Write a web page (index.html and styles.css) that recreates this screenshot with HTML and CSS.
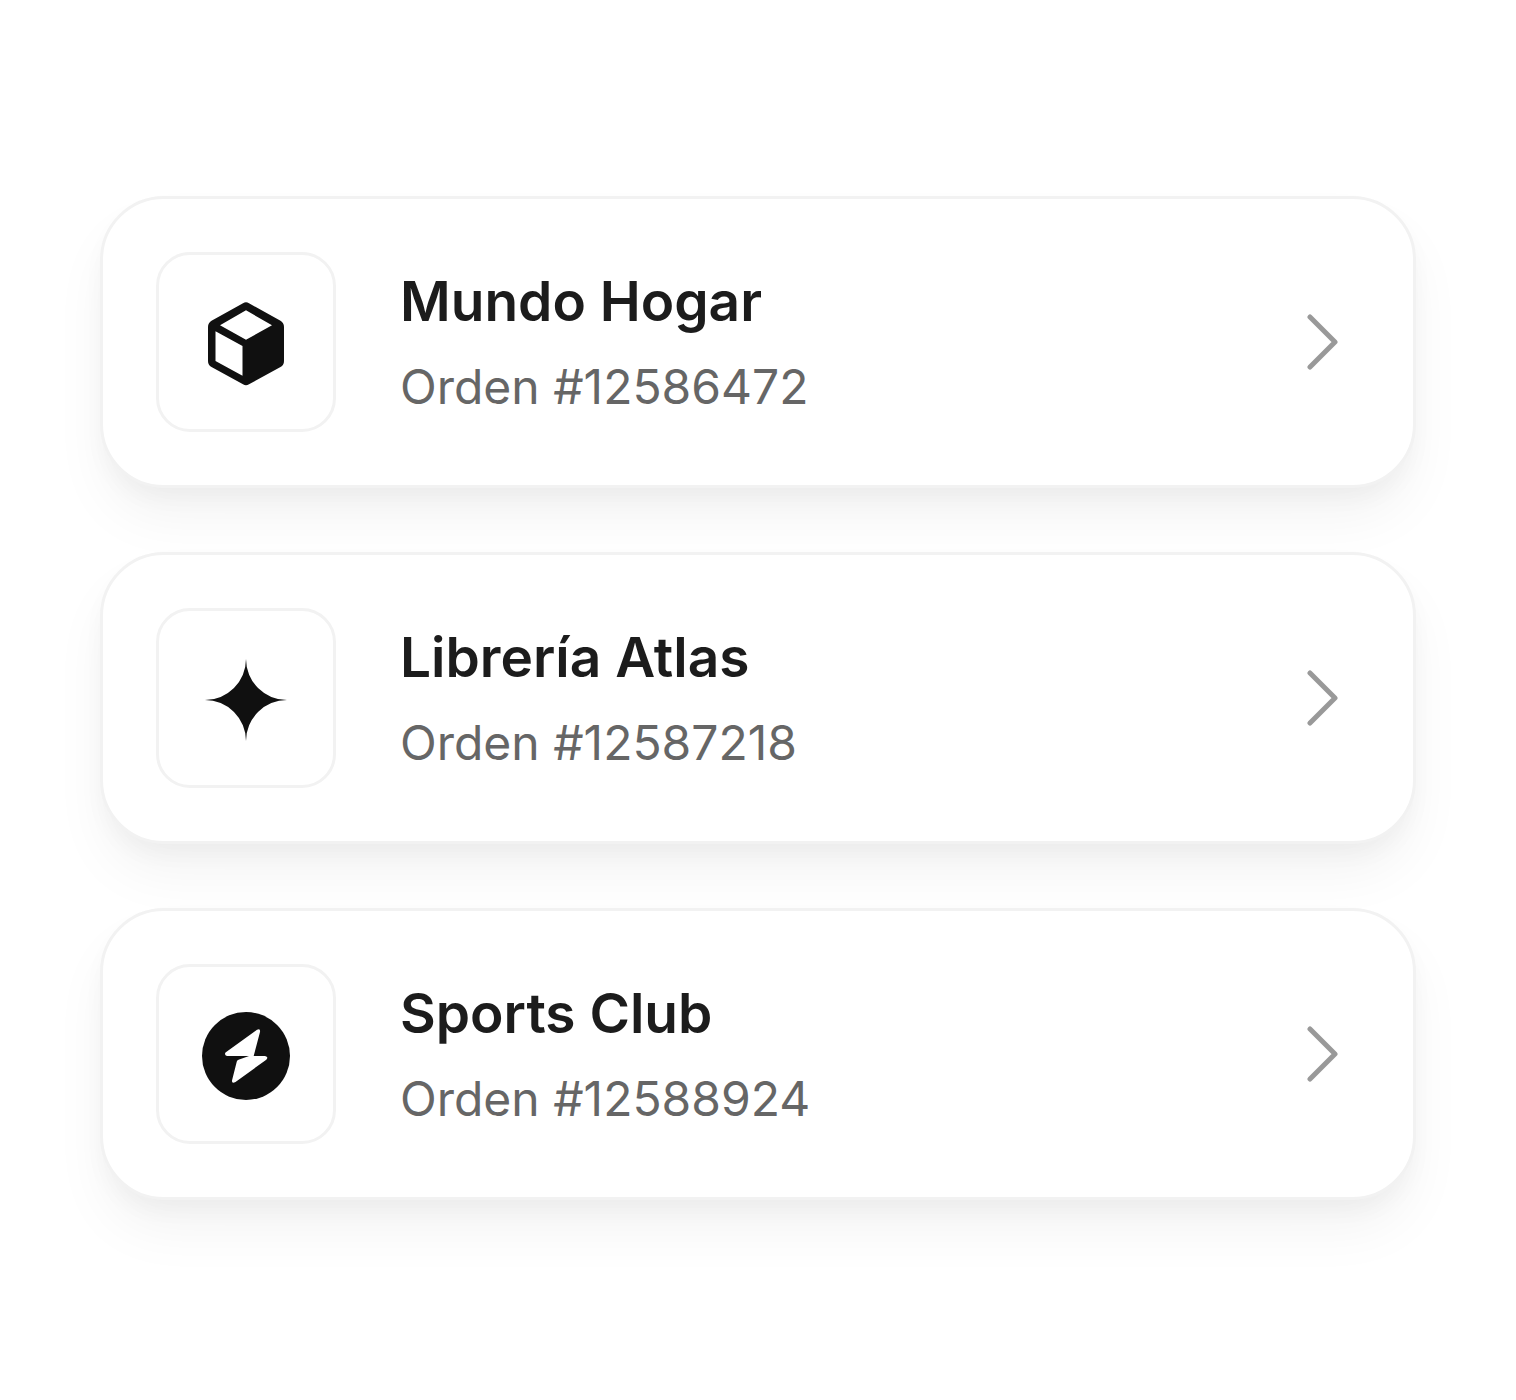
FILE: index.html
```html
<!DOCTYPE html>
<html lang="es">
<head>
    <meta charset="UTF-8">
    <meta name="viewport" content="width=device-width, initial-scale=1.0">
    <title>Orden</title>
    <link rel="stylesheet" href="styles.css">
</head>
<body>
    <ul class="orders">
        <li>
            <a href="#12586472" class="order">
                <span class="logo">
                    <svg viewBox="0 0 96 96" aria-hidden="true">
                        <path fill-rule="evenodd" d="M45 9.300Q48 7.400 51 9.300L82.500 26.800Q86 29 86 33V67Q86 71 82.500 73L51 90.300Q48 92.300 45 90.300L13.500 73Q10 71 10 67V33Q10 29 13.500 26.800ZM48 16.300L22 31.300L48 45.700L74 31.300ZM17.500 37.300V67L44.500 81.700V52Z"/>
                    </svg>
                </span>
                <span class="info">
                    <span class="store">Mundo Hogar</span>
                    <span class="number">Orden #12586472</span>
                </span>
                <svg class="chevron" viewBox="0 0 32 56" aria-hidden="true"><path d="M3 3L28 28L3 53"/></svg>
            </a>
        </li>
        <li>
            <a href="#12587218" class="order">
                <span class="logo">
                    <svg viewBox="0 0 96 96" aria-hidden="true">
                        <path d="M48 9A41 41 0 0 0 89 50A41 41 0 0 0 48 91A41 41 0 0 0 7 50A41 41 0 0 0 48 9Z"/>
                    </svg>
                </span>
                <span class="info">
                    <span class="store">Librería Atlas</span>
                    <span class="number">Orden #12587218</span>
                </span>
                <svg class="chevron" viewBox="0 0 32 56" aria-hidden="true"><path d="M3 3L28 28L3 53"/></svg>
            </a>
        </li>
        <li>
            <a href="#12588924" class="order">
                <span class="logo">
                    <svg viewBox="0 0 96 96" aria-hidden="true">
                        <circle cx="48" cy="50" r="44"/>
                        <path class="bolt" d="M59 23.800Q62.600 22 62 26L55.700 50L67 50.100Q71 51 68.300 53.700L37.500 76Q33.600 78 34 74.500L38.800 55.500Q39 54.300 40.500 53.800L51 50H29Q26 49 27.500 46.500Z"/>
                    </svg>
                </span>
                <span class="info">
                    <span class="store">Sports Club</span>
                    <span class="number">Orden #12588924</span>
                </span>
                <svg class="chevron" viewBox="0 0 32 56" aria-hidden="true"><path d="M3 3L28 28L3 53"/></svg>
            </a>
        </li>
    </ul>
</body>
</html>
```
FILE: styles.css
```css
* {
    box-sizing: border-box;
}

body {
    margin: 0;
    background-color: #fff;
    font-family: Inter, "Liberation Sans", sans-serif;
}

.orders {
    display: flex;
    flex-direction: column;
    gap: 64px;
    margin: 0;
    padding: 196px 100px;
    list-style: none;
}

.order {
    display: flex;
    align-items: center;
    gap: 64px;
    padding: 53px 74px 53px 53px;
    border: 3px solid #f2f2f2;
    border-radius: 64px;
    background-color: #fff;
    box-shadow: 0 32px 56px -4px rgba(0, 0, 0, .05), 0 12px 24px -4px rgba(0, 0, 0, .04);
    text-decoration: none;
}

.logo {
    display: flex;
    align-items: center;
    justify-content: center;
    flex: none;
    width: 180px;
    height: 180px;
    border: 3px solid #f2f2f2;
    border-radius: 34px;
}

.logo svg {
    width: 96px;
    height: 96px;
    fill: #101010;
}

.logo .bolt {
    fill: #fff;
}

.info {
    display: flex;
    flex-direction: column;
    flex: 1;
    gap: 14px;
    padding-top: 4px;
}

.store {
    font-size: 55px;
    font-weight: 600;
    line-height: 72px;
    color: #1c1c1c;
}

.number {
    font-size: 48px;
    line-height: 72px;
    color: #666;
}

.chevron {
    flex: none;
    width: 32px;
    height: 56px;
    fill: none;
    stroke: #999;
    stroke-width: 5;
    stroke-linecap: round;
    stroke-linejoin: round;
}
```
